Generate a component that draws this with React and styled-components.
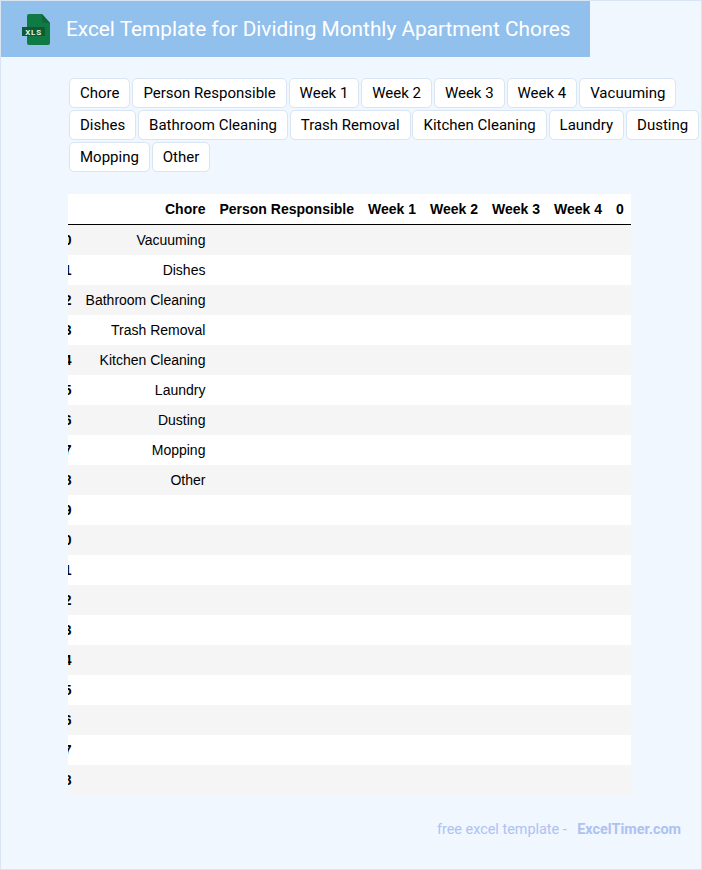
import React from "react";
import styled, { createGlobalStyle } from "styled-components";

const chips = [
  "Chore",
  "Person Responsible",
  "Week 1",
  "Week 2",
  "Week 3",
  "Week 4",
  "Vacuuming",
  "Dishes",
  "Bathroom Cleaning",
  "Trash Removal",
  "Kitchen Cleaning",
  "Laundry",
  "Dusting",
  "Mopping",
  "Other",
];

const columns = ["Chore", "Person Responsible", "Week 1", "Week 2", "Week 3", "Week 4", "0"];
const chores = chips.slice(6);
const rows = Array.from({ length: 19 }, (_, i) => chores[i] || "");

const GlobalStyle = createGlobalStyle`
  html, body {
    margin: 0;
    padding: 0;
    background: #f0f7ff;
  }
`;

const Page = styled.div`
  box-sizing: border-box;
  width: 702px;
  height: 870px;
  border: 1px solid #d9e5f2;
  background: #f0f7ff;
  font-family: Roboto, sans-serif;
  overflow: hidden;
`;

const Header = styled.header`
  display: flex;
  align-items: center;
  width: 589px;
  height: 56px;
  box-sizing: border-box;
  padding-left: 21px;
  background: #92c0ed;
`;

const Title = styled.h1`
  margin: 0 0 0 16px;
  font-size: 20.8px;
  font-weight: 400;
  color: #fff;
  white-space: nowrap;
`;

const Content = styled.main`
  padding: 21px 0 0 67px;
`;

const ChipList = styled.div`
  display: flex;
  flex-wrap: wrap;
  gap: 2px 1.9px;
  width: 632px;
  margin-left: 1px;
`;

const Chip = styled.span`
  box-sizing: border-box;
  height: 30px;
  padding: 0 10px;
  border: 1px solid #d9e5f2;
  border-radius: 5px;
  background: #fff;
  color: #000;
  font-size: 15px;
  line-height: 28px;
  white-space: nowrap;
`;

const TableClip = styled.div`
  width: 564px;
  margin-top: 22px;
  overflow: hidden;
`;

const Table = styled.table`
  margin-left: -19px;
  border-collapse: separate;
  border-spacing: 0;
  background: #fff;
  color: #000;
  font-family: "Liberation Sans", Arial, sans-serif;
  font-size: 14px;
`;

const Row = styled.tr`
  height: 30px;
  background: ${(p) => (p.$odd ? "#f5f5f5" : "#fff")};
`;

const HeadCell = styled.th`
  box-sizing: content-box;
  height: 30px;
  padding: 0 7px;
  border-bottom: 1px solid #000;
  font-weight: 700;
  text-align: right;
  white-space: nowrap;
  vertical-align: middle;
`;

const Cell = styled.td`
  padding: 0 7px;
  font-weight: ${(p) => (p.$bold ? 700 : 400)};
  text-align: right;
  white-space: nowrap;
  vertical-align: middle;
`;

const Footer = styled.footer`
  display: flex;
  justify-content: flex-end;
  margin-top: 25px;
  padding-right: 20px;
  color: #adc2f2;
  font-size: 14.4px;
  line-height: 20px;
  white-space: pre;
`;

const FooterLink = styled.span`
  margin-left: 7px;
  font-weight: 700;
`;

const XlsIcon = () => (
  <svg width="28" height="32" viewBox="0 0 28 32" aria-hidden="true">
    <path d="M5 3a2 2 0 0 1 2-2h13l8 9v20a2 2 0 0 1-2 2H7a2 2 0 0 1-2-2z" fill="#107a45" />
    <path d="M20 1l8 9h-6a2 2 0 0 1-2-2z" fill="#0c6a3a" />
    <rect x="0" y="14" width="23" height="9" fill="#0b5c33" />
    <text
      x="11.5"
      y="21.6"
      textAnchor="middle"
      fontFamily="Roboto, sans-serif"
      fontSize="8"
      fontWeight="700"
      letterSpacing="0.8"
      fill="#e4f2ea"
    >
      XLS
    </text>
  </svg>
);

const App = () => (
  <>
    <GlobalStyle />
    <Page>
      <Header>
        <XlsIcon />
        <Title>Excel Template for Dividing Monthly Apartment Chores</Title>
      </Header>
      <Content>
        <ChipList>
          {chips.map((chip) => (
            <Chip key={chip}>{chip}</Chip>
          ))}
        </ChipList>
        <TableClip>
          <Table>
            <thead>
              <tr>
                <HeadCell />
                {columns.map((col) => (
                  <HeadCell key={col}>{col}</HeadCell>
                ))}
              </tr>
            </thead>
            <tbody>
              {rows.map((chore, i) => (
                <Row key={i} $odd={i % 2 === 0}>
                  <Cell $bold>{i}</Cell>
                  <Cell>{chore}</Cell>
                  <Cell />
                  <Cell />
                  <Cell />
                  <Cell />
                  <Cell />
                  <Cell />
                </Row>
              ))}
            </tbody>
          </Table>
        </TableClip>
        <Footer>
          free excel template - <FooterLink>ExcelTimer.com</FooterLink>
        </Footer>
      </Content>
    </Page>
  </>
);

export default App;
